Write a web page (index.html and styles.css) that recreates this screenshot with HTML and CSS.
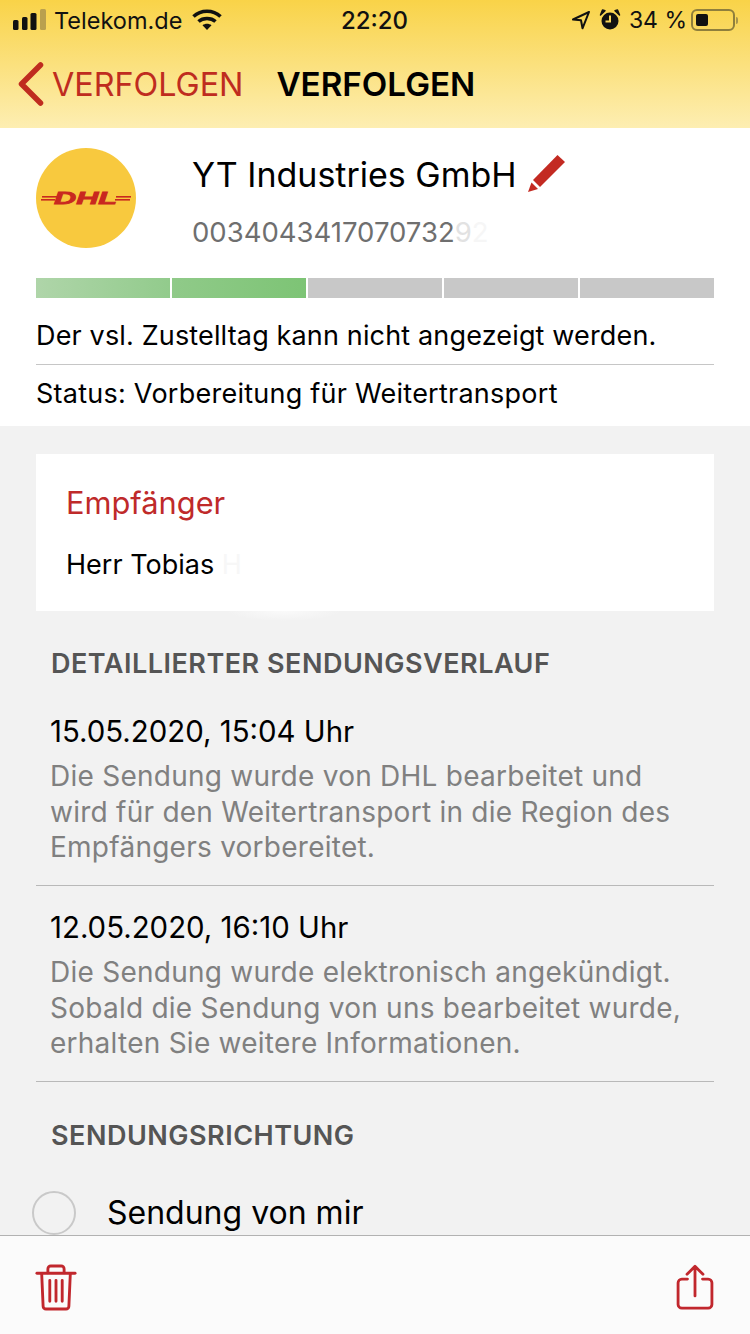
FILE: index.html
```html
<!DOCTYPE html>
<html lang="de">
<head>
    <meta charset="UTF-8">
    <meta name="viewport" content="width=device-width, initial-scale=1.0">
    <title>Verfolgen</title>
    <link rel="stylesheet" href="styles.css">
</head>
<body>
    <header class="top-bar">
        <div class="status-bar">
            <div class="status-left">
                <svg class="signal" width="34" height="22" viewBox="0 0 34 22">
                    <rect x="0" y="11" width="5.500" height="10" rx="1.500" fill="#111"/>
                    <rect x="9" y="8" width="5.500" height="13" rx="1.500" fill="#111"/>
                    <rect x="17.500" y="4" width="6" height="17" rx="1.500" fill="#111"/>
                    <rect x="27" y="0" width="6" height="21" rx="1.500" fill="#b9a04e"/>
                </svg>
                <span class="carrier">Telekom.de</span>
                <svg class="wifi" width="30" height="22" viewBox="0 0 30 22" fill="none" stroke="#111" stroke-width="3.600">
                    <path d="M1.500 7.500C9 .5 21 .5 28.500 7.500"/>
                    <path d="M6.500 12.500C11 8.500 19 8.500 23.500 12.500"/>
                    <path d="M15 21l-4.500-4.700c2.500-2 6.500-2 9 0z" fill="#111" stroke="none"/>
                </svg>
            </div>
            <div class="status-time">22:20</div>
            <div class="status-right">
                <svg width="20" height="20" viewBox="0 0 20 20" fill="none" stroke="#111" stroke-width="2" stroke-linejoin="round">
                    <path d="M18 2 2 9.500l8 .8 1.500 8z"/>
                </svg>
                <svg class="alarm" width="22" height="22" viewBox="0 0 22 22">
                    <circle cx="11" cy="12" r="8.500" fill="#111"/>
                    <path d="M1.500 6 6 1.800 3.500 1zM20.500 6 16 1.800 18.500 1z" fill="#111" stroke="#111" stroke-width="1.500" stroke-linejoin="round"/>
                    <path d="M11 6.500V12.500H6.500" fill="none" stroke="#f9d658" stroke-width="2"/>
                </svg>
                <span class="battery-text">34 %</span>
                <div class="battery"><div class="battery-level"></div></div>
                <div class="battery-tip"></div>
            </div>
        </div>
        <nav class="nav-bar">
            <a class="back-link">
                <svg width="26" height="44" viewBox="0 0 26 44" fill="none" stroke="#bf2c1f" stroke-width="5.500" stroke-linecap="round" stroke-linejoin="round">
                    <path d="M22.500 3 3.500 22l19 19"/>
                </svg>
                <span>VERFOLGEN</span>
            </a>
            <h1>VERFOLGEN</h1>
        </nav>
    </header>

    <div class="content">
        <section class="summary">
            <div class="shipment">
                <div class="logo">
                    <svg width="90" height="24" viewBox="0 0 90 24">
                        <g fill="#c9281f">
                            <rect x="1" y="10" width="15" height="1.600"/>
                            <rect x="0" y="13" width="14" height="1.600"/>
                            <rect x="75" y="10" width="15" height="1.600"/>
                            <rect x="74" y="13" width="15" height="1.600"/>
                            <text x="13" y="18" textLength="63" lengthAdjust="spacingAndGlyphs" class="logo-text">DHL</text>
                        </g>
                    </svg>
                </div>
                <div class="shipment-info">
                    <div class="shipment-name">
                        <span>YT Industries GmbH</span>
                        <svg width="38" height="38" viewBox="0 0 38 38">
                            <path d="M29.500 0 37 7 12 32 5 25z" fill="#c32a22"/>
                            <path d="M3.500 27.500 10 34 0 37z" fill="#c32a22"/>
                        </svg>
                    </div>
                    <div class="shipment-number">0034043417070732<span class="faded">9</span><span class="faded-more">2</span></div>
                </div>
            </div>
            <div class="progress">
                <div class="step step-one"></div>
                <div class="step step-two"></div>
                <div class="step"></div>
                <div class="step"></div>
                <div class="step"></div>
            </div>
            <div class="info-line">Der vsl. Zustelltag kann nicht angezeigt werden.</div>
            <div class="info-line">Status: Vorbereitung für Weitertransport</div>
        </section>

        <section class="recipient">
            <h2>Empfänger</h2>
            <p>Herr Tobias <span class="hidden-name">H</span></p>
        </section>

        <h3 class="section-title">DETAILLIERTER SENDUNGSVERLAUF</h3>
        <div class="event">
            <div class="event-date">15.05.2020, 15:04 Uhr</div>
            <p>Die Sendung wurde von DHL bearbeitet und wird für den Weitertransport in die Region des Empfängers vorbereitet.</p>
        </div>
        <div class="event">
            <div class="event-date">12.05.2020, 16:10 Uhr</div>
            <p>Die Sendung wurde elektronisch angekündigt. Sobald die Sendung von uns bearbeitet wurde, erhalten Sie weitere Informationen.</p>
        </div>

        <h3 class="section-title direction-title">SENDUNGSRICHTUNG</h3>
        <label class="radio-row">
            <span class="radio"></span>
            <span class="radio-label">Sendung von mir</span>
        </label>
    </div>

    <footer class="toolbar">
        <svg width="42" height="48" viewBox="0 0 44 50" fill="none" stroke="#c1272d" stroke-width="3" stroke-linecap="round" stroke-linejoin="round">
            <path d="M2 9.500H42"/>
            <path d="M13.500 9V5a3 3 0 0 1 3-3h11a3 3 0 0 1 3 3v4"/>
            <path d="M7 10l1.500 34a3 3 0 0 0 3 3h21a3 3 0 0 0 3-3L37 10"/>
            <path d="M15.500 17v22M22 17v22M28.500 17v22"/>
        </svg>
        <svg width="38" height="47" viewBox="0 0 40 50" fill="none" stroke="#c1272d" stroke-width="3" stroke-linecap="round" stroke-linejoin="round">
            <path d="M12 16H6a4 4 0 0 0-4 4v23a4 4 0 0 0 4 4h28a4 4 0 0 0 4-4V20a4 4 0 0 0-4-4h-6"/>
            <path d="M20 34V3M11.500 11 20 2.500 28.500 11"/>
        </svg>
    </footer>
</body>
</html>
```

FILE: styles.css
```css
* {
    box-sizing: border-box;
}
html, body {
    height: 100%;
}
body {
    margin: 0;
    display: flex;
    flex-direction: column;
    height: 1334px;
    overflow: hidden;
    font-family: Inter, "Liberation Sans", sans-serif;
    background-color: #f2f2f2;
    color: #000;
}

/* yellow header */
.top-bar {
    height: 128px;
    flex-shrink: 0;
    background: linear-gradient(#f9d348, #fdeeb2);
}
.status-bar {
    height: 40px;
    padding: 0 12px 0 13px;
    display: grid;
    grid-template-columns: 1fr auto 1fr;
    align-items: center;
    font-size: 24px;
    color: #111;
}
.status-left, .status-right {
    display: flex;
    align-items: center;
}
.status-left {
    gap: 7px;
}
.carrier {
    font-size: 23.500px;
}
.wifi {
    margin-left: 3px;
}
.status-time {
    font-weight: 500;
    font-size: 24px;
    padding-right: 2px;
}
.status-right {
    justify-content: flex-end;
}
.alarm {
    margin-left: 8px;
}
.battery-text {
    margin-left: 8px;
    font-size: 23px;
}
.battery {
    width: 44px;
    height: 22px;
    margin-left: 4px;
    padding: 3px;
    border: 2px solid #8f7f3c;
    border-radius: 6px;
}
.battery-level {
    width: 12px;
    height: 12px;
    background-color: #111;
    border-radius: 2px;
}
.battery-tip {
    width: 2px;
    height: 7px;
    margin-left: 1px;
    background-color: #a8954a;
    border-radius: 0 2px 2px 0;
}
.nav-bar {
    height: 88px;
    padding: 0 0 0 18px;
    display: flex;
    align-items: center;
    gap: 33px;
}
.back-link {
    display: flex;
    align-items: center;
    gap: 8px;
    font-size: 32.300px;
    color: #bf2c1f;
}
.nav-bar h1 {
    margin: 0;
    font-size: 33.200px;
    font-weight: 600;
}

.content {
    flex: 1;
    overflow: hidden;
}

/* shipment summary */
.summary {
    height: 298px;
    padding: 20px 36px 0;
    background-color: #fff;
}
.shipment {
    display: flex;
    gap: 56px;
    height: 130px;
}
.logo {
    width: 100px;
    height: 100px;
    border-radius: 50%;
    background-color: #f8c93e;
    display: flex;
    align-items: center;
    justify-content: center;
}
.logo-text {
    font-family: "Liberation Sans", sans-serif;
    font-size: 17px;
    font-weight: 700;
    font-style: italic;
    stroke: #c9281f;
    stroke-width: 0.8px;
}
.shipment-name {
    display: flex;
    align-items: center;
    gap: 11px;
    height: 52px;
    font-size: 34px;
}
.shipment-number {
    margin-top: 15px;
    font-size: 27.500px;
    color: #6f6f6f;
}
.faded {
    color: #e2e2e2;
}
.faded-more {
    color: #f6f6f6;
}
.progress {
    display: flex;
    gap: 2px;
    height: 20px;
    margin-bottom: 13px;
}
.step {
    flex: 1;
    background-color: #c8c8c8;
}
.step-one {
    background: linear-gradient(90deg, #afd5a9, #92cb8c);
}
.step-two {
    background: linear-gradient(90deg, #90ca89, #7dc475);
}
.info-line {
    height: 53px;
    padding-top: 8px;
    font-size: 27px;
    letter-spacing: 0.15px;
}
.info-line + .info-line {
    height: 61px;
    padding-top: 12px;
    letter-spacing: 0.25px;
    border-top: 1px solid #c6c6c6;
}

/* recipient card */
.recipient {
    position: relative;
    height: 157px;
    margin: 28px 36px 0;
    padding: 30px;
    background-color: #fff;
}
.recipient::after {
    content: "";
    position: absolute;
    top: 100%;
    left: 190px;
    width: 116px;
    height: 10px;
    background: radial-gradient(ellipse at 50% 0, #fafafa, rgba(250, 250, 250, 0) 70%);
}
.recipient h2 {
    margin: 0 0 26px;
    font-size: 30.800px;
    line-height: 38px;
    font-weight: 400;
    color: #bf2a2a;
}
.recipient p {
    margin: 0;
    font-size: 27px;
    line-height: 34px;
}
.hidden-name {
    color: #f7f7f7;
}

/* tracking history */
.section-title {
    margin: 37px 51px 0;
    font-size: 27px;
    letter-spacing: 0.5px;
    line-height: 32px;
    font-weight: 600;
    color: #555;
}
.event {
    margin: 0 36px;
    padding: 24px 14px 0;
    border-bottom: 1px solid #b9b9b9;
    height: 196px;
}
.section-title + .event {
    padding-top: 34px;
    height: 206px;
}
.event-date {
    font-size: 29.400px;
    line-height: 36px;
}
.event p {
    margin: 9px 0 0;
    font-size: 28px;
    letter-spacing: 0.25px;
    line-height: 35.500px;
    color: #808080;
}
.direction-title {
    margin-top: 38px;
}
.radio-row {
    display: flex;
    align-items: center;
    gap: 31px;
    margin: 39px 0 0 32px;
    font-size: 32px;
}
.radio {
    width: 44px;
    height: 44px;
    border: 2px solid #c9c9c9;
    border-radius: 50%;
}
.radio-label {
    padding-bottom: 2px;
}

/* bottom toolbar */
.toolbar {
    height: 99px;
    flex-shrink: 0;
    padding: 5px 36px 0 35px;
    display: flex;
    align-items: center;
    justify-content: space-between;
    background-color: #fbfbfb;
    border-top: 1px solid #b2b2b2;
}
```
